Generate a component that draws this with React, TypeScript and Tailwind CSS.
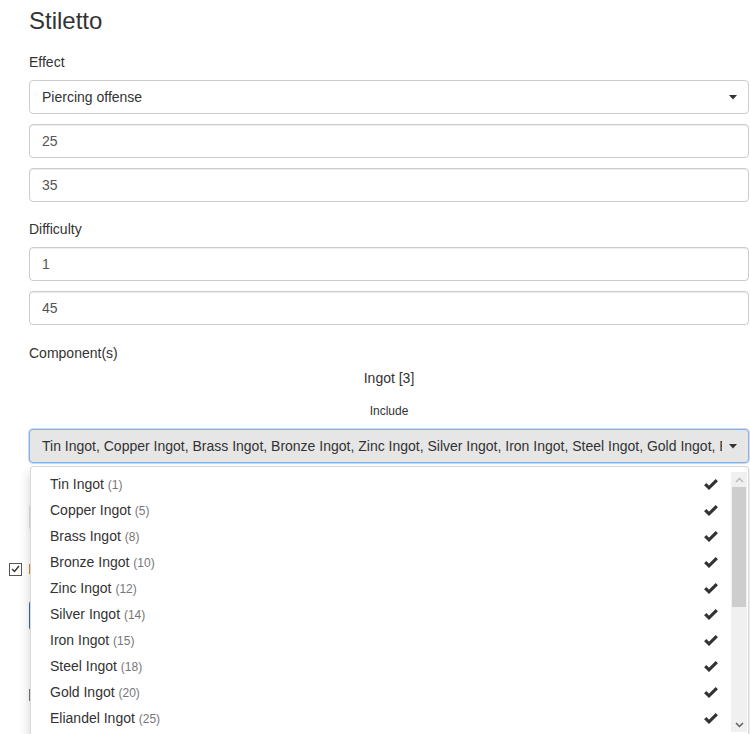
import React from "react";

const ingots: [string, number][] = [
  ["Tin Ingot", 1],
  ["Copper Ingot", 5],
  ["Brass Ingot", 8],
  ["Bronze Ingot", 10],
  ["Zinc Ingot", 12],
  ["Silver Ingot", 14],
  ["Iron Ingot", 15],
  ["Steel Ingot", 18],
  ["Gold Ingot", 20],
  ["Eliandel Ingot", 25],
  ["Mithril Ingot", 30],
];

function Caret() {
  return (
    <svg width="8" height="5" viewBox="0 0 8 5" className="shrink-0">
      <path d="M0 0 H8 L4 4.5 Z" fill="#333" />
    </svg>
  );
}

function Check() {
  return (
    <svg width="14" height="11" viewBox="0 0 14 11">
      <path d="M1.2 5.2 L5 8.8 L12.8 1.2" fill="none" stroke="#333" strokeWidth="3.2" />
    </svg>
  );
}

function Input({ value }: { value: string }) {
  return (
    <div className="h-[34px] rounded border border-[#ccc] px-3 flex items-center text-[#555] shadow-[inset_0_1px_1px_rgba(0,0,0,0.075)]">
      {value}
    </div>
  );
}

export default function App() {
  return (
    <main className="relative h-[734px] overflow-hidden bg-white text-[14px] leading-5 text-[#333] font-['Liberation_Sans',Arial,sans-serif]">
      <div className="pl-[29px] pr-px">
        <h3 className="pt-[7px] text-[24px] leading-[28px]">Stiletto</h3>

        <label className="block mt-[17px]">Effect</label>
        <div className="mt-2 h-[34px] rounded border border-[#ccc] pl-3 pr-[11px] flex items-center justify-between text-[#333]">
          <span>Piercing offense</span>
          <Caret />
        </div>
        <div className="mt-[10px]">
          <Input value="25" />
        </div>
        <div className="mt-[10px]">
          <Input value="35" />
        </div>

        <label className="block mt-[17px]">Difficulty</label>
        <div className="mt-2">
          <Input value="1" />
        </div>
        <div className="mt-[10px]">
          <Input value="45" />
        </div>

        <label className="block mt-[18px]">Component(s)</label>
        <div className="mt-[5px] text-center">Ingot [3]</div>
        <div className="mt-[15px] text-center text-[12px] leading-4">Include</div>

        <div className="mt-[10px] h-[34px] rounded border border-[#86b0e6] bg-[#e6e6e6] shadow-[0_0_0_1px_#c9dcf5] pl-3 pr-[11px] flex items-center gap-[7px]">
          <span className="flex-1 overflow-hidden whitespace-nowrap">
            {ingots.map(([n]) => n).join(", ")}
          </span>
          <Caret />
        </div>

        <div className="mt-[40px] h-[28px] rounded border border-[#ddd]" />

        <div className="mt-[28px] -ml-5 flex items-center gap-[7px] h-5">
          <span className="w-[13px] h-[13px] border border-[#555] bg-white flex items-center justify-center">
            <svg width="9" height="8" viewBox="0 0 9 8">
              <path d="M1 4 L3.5 6.5 L8 1" fill="none" stroke="#333" strokeWidth="1.4" />
            </svg>
          </span>
          <span className="h-[10px] w-[40px] bg-[#d9822b]" />
        </div>
        <div className="mt-[21px] h-[31px] w-[120px] rounded bg-[#337ab7] border border-[#2e6da4]" />
        <div className="mt-[58px] h-[12px] w-[120px] bg-[#777]" />
      </div>

      {/* open bootstrap-select menu */}
      <div className="absolute left-[30px] right-px top-[466px] h-[300px] rounded border border-[rgba(0,0,0,0.15)] bg-white shadow-[0_6px_12px_rgba(0,0,0,0.175)] flex pt-1">
        <ul className="flex-1">
          {ingots.slice(0, 10).map(([name, n]) => (
            <li key={name} className="h-[26px] pl-[19px] pr-[13px] flex items-center justify-between">
              <span>
                {name} <small className="text-[12px] text-[#777]">({n})</small>
              </span>
              <Check />
            </li>
          ))}
        </ul>
        <div className="w-[16px] mr-px mt-px bg-[#f0f0f0] flex flex-col h-[260px]">
          <div className="h-[15px] flex items-center justify-center">
            <svg width="9" height="6" viewBox="0 0 9 6">
              <path d="M1 5 L4.5 1.5 L8 5" fill="none" stroke="#bbb" strokeWidth="1.5" />
            </svg>
          </div>
          <div className="h-[120px] mx-px bg-[#cdcdcd]" />
          <div className="flex-1" />
          <div className="h-[15px] flex items-center justify-center">
            <svg width="9" height="6" viewBox="0 0 9 6">
              <path d="M1 1 L4.5 4.5 L8 1" fill="none" stroke="#606060" strokeWidth="1.5" />
            </svg>
          </div>
        </div>
      </div>
    </main>
  );
}
